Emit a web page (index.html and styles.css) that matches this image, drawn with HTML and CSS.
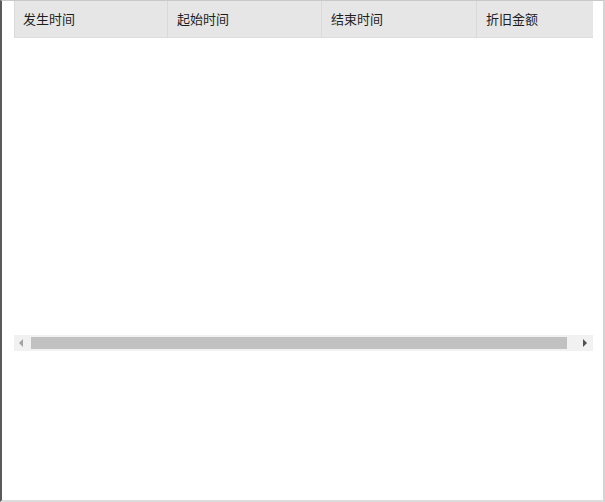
FILE: index.html
```html
<!DOCTYPE html>
<html lang="zh">
<head>
<meta charset="utf-8">
<link rel="stylesheet" href="styles.css">
</head>
<body>
<div class="frame">
  <div class="grid">
    <div class="head">
      <div class="cell c1">发生时间</div>
      <div class="cell c2">起始时间</div>
      <div class="cell c3">结束时间</div>
      <div class="cell c4">折旧金额</div>
    </div>
    <div class="rows"></div>
    <div class="hscroll">
      <div class="arrow left"></div>
      <div class="track"><div class="thumb"></div></div>
      <div class="arrow right"></div>
    </div>
  </div>
</div>
</body>
</html>
```
FILE: styles.css
```css
html, body { margin: 0; padding: 0; background: #fff; }
.frame {
  box-sizing: border-box;
  width: 605px;
  height: 502px;
  border-left: 2px solid #5a5a5a;
  border-top: 1px solid #c8c8c8;
  border-right: 2px solid #d4d4d4;
  border-bottom: 2px solid #dcdcdc;
  padding-left: 12px;
  font-family: "Noto Sans CJK SC", "Noto Sans", sans-serif;
}
.grid { width: 579px; }
.head {
  display: flex;
  height: 37px;
  background: #e6e6e6;
  border-left: 1px solid #dadada;
  border-bottom: 1px solid #dcdcdc;
  box-sizing: border-box;
}
.cell {
  box-sizing: border-box;
  padding-left: 8px;
  font-size: 13px;
  line-height: 36px;
  color: #1e1e1e;
  border-right: 1px solid #d9d9d9;
  white-space: nowrap;
  overflow: hidden;
}
.c1 { width: 153px; }
.c2 { width: 154px; padding-left: 9px; }
.c3 { width: 155px; padding-left: 9px; }
.c4 { flex: 1; padding-left: 9px; border-right: none; }
.rows { height: 297px; }
.hscroll {
  display: flex;
  align-items: center;
  height: 16px;
  background: #f1f1f1;
}
.arrow { width: 17px; height: 16px; position: relative; }
.arrow::after {
  content: "";
  position: absolute;
  top: 4px;
  width: 0; height: 0;
  border-top: 4px solid transparent;
  border-bottom: 4px solid transparent;
}
.arrow.left::after { left: 5px; border-right: 4px solid #a3a3a3; }
.arrow.right::after { left: 7px; border-left: 4px solid #505050; }
.track { flex: 1; height: 16px; display: flex; align-items: center; }
.thumb { width: 536px; height: 12px; background: #c1c1c1; }
```
